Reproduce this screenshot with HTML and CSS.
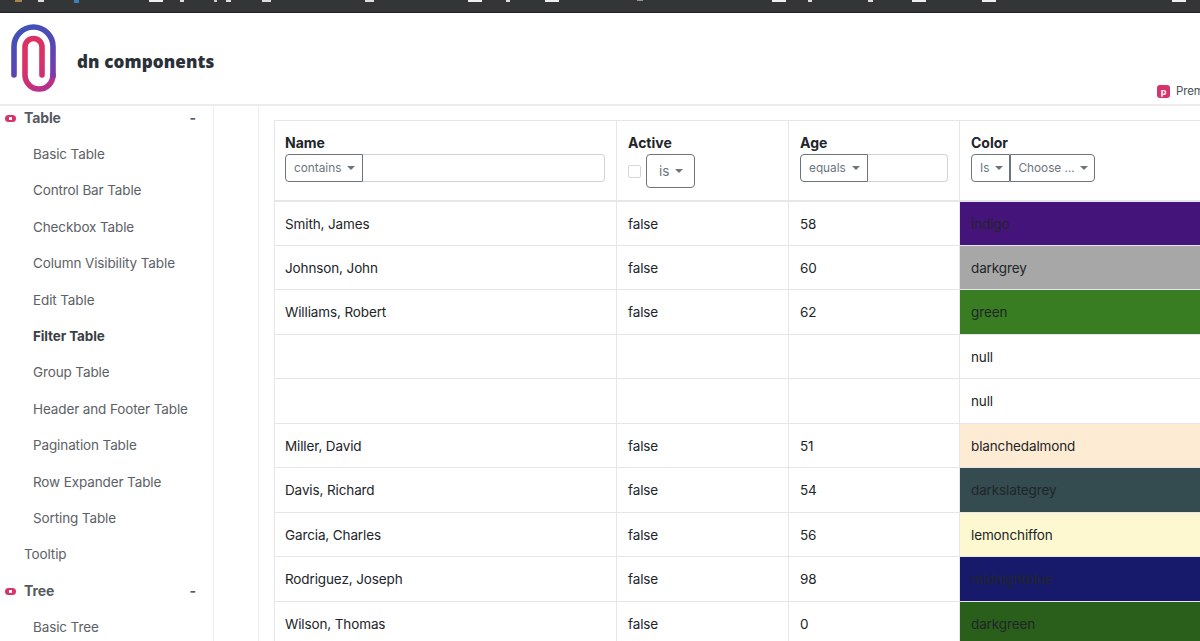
FILE: index.html
```html
<!DOCTYPE html>
<html lang="en">
<head>
<meta charset="utf-8">
<title>dn components</title>
<link rel="stylesheet" href="styles.css">
</head>
<body>
<div class="browserbar">
  <svg class="bar-icons" width="1200" height="3" viewBox="0 0 1200 3">
    <rect x="15" y="0" width="7" height="2" fill="#a8874d"/>
    <rect x="38" y="0" width="6" height="2" fill="#ddd"/>
    <rect x="74" y="0" width="5" height="3" fill="#3f7fb5"/>
    <rect x="149" y="0" width="14" height="2" fill="#eee"/>
    <rect x="180" y="0" width="4" height="2" fill="#ddd"/>
    <rect x="214" y="0" width="3" height="2" fill="#ccc"/>
    <rect x="226" y="0" width="5" height="2" fill="#ddd"/>
    <rect x="262" y="0" width="9" height="2" fill="#ddd"/>
    <rect x="365" y="0" width="9" height="2" fill="#ddd"/>
    <rect x="468" y="0" width="14" height="2" fill="#eee"/>
    <rect x="506" y="0" width="4" height="2" fill="#ddd"/>
    <rect x="545" y="0" width="14" height="2" fill="#eee"/>
    <rect x="637" y="0" width="6" height="1" fill="#999"/>
    <rect x="772" y="0" width="14" height="2" fill="#eee"/>
    <rect x="808" y="0" width="4" height="2" fill="#ddd"/>
    <rect x="868" y="0" width="5" height="2" fill="#ddd"/>
    <rect x="912" y="0" width="14" height="2" fill="#eee"/>
    <rect x="982" y="0" width="14" height="2" fill="#eee"/>
    <rect x="1172" y="0" width="14" height="2" fill="#eee"/>
  </svg>
</div>
<header class="site-header">
  <a class="brand" href="#">
    <svg class="logo" width="64" height="92" viewBox="0 0 64 92">
      <defs>
        <linearGradient id="outerGrad" gradientUnits="userSpaceOnUse" x1="14" y1="12" x2="53" y2="80">
          <stop offset="0" stop-color="#3b55b8"/>
          <stop offset="0.5" stop-color="#5a45b4"/>
          <stop offset="1" stop-color="#8f35a8"/>
        </linearGradient>
        <linearGradient id="innerGrad" gradientUnits="userSpaceOnUse" x1="53" y1="88" x2="30" y2="50">
          <stop offset="0" stop-color="#8f35a8"/>
          <stop offset="0.55" stop-color="#c9307a"/>
          <stop offset="1" stop-color="#dc3263"/>
        </linearGradient>
      </defs>
      <path class="clip" stroke="url(#innerGrad)" d="M53 62 A14 14 0 0 1 25 62 V34 A8.5 8.5 0 0 1 42 34 V62"/>
      <path class="clip" stroke="url(#outerGrad)" d="M14 62 V33.5 A19.5 19.5 0 0 1 53 33.5 V63"/>
    </svg>
    <span class="brand-name">dn components</span>
  </a>
  <div class="premium">
    <span class="premium-badge">p</span>
    <span class="premium-text">Premium</span>
  </div>
</header>
<div class="layout">
  <nav class="sidebar">
    <div class="nav-group"><span class="p-mark"></span><span>Table</span><span class="collapse">-</span></div>
    <a class="nav-sub" href="#">Basic Table</a>
    <a class="nav-sub" href="#">Control Bar Table</a>
    <a class="nav-sub" href="#">Checkbox Table</a>
    <a class="nav-sub" href="#">Column Visibility Table</a>
    <a class="nav-sub" href="#">Edit Table</a>
    <a class="nav-sub current" href="#">Filter Table</a>
    <a class="nav-sub" href="#">Group Table</a>
    <a class="nav-sub" href="#">Header and Footer Table</a>
    <a class="nav-sub" href="#">Pagination Table</a>
    <a class="nav-sub" href="#">Row Expander Table</a>
    <a class="nav-sub" href="#">Sorting Table</a>
    <a class="nav-top" href="#">Tooltip</a>
    <div class="nav-group"><span class="p-mark"></span><span>Tree</span><span class="collapse">-</span></div>
    <a class="nav-sub" href="#">Basic Tree</a>
  </nav>
  <div class="gutter"></div>
  <main class="content">
    <table class="data-table">
      <colgroup>
        <col class="col-name"><col class="col-active"><col class="col-age"><col class="col-color">
      </colgroup>
      <thead>
        <tr>
          <th>
            <div class="th-title">Name</div>
            <div class="filter"><button class="drop joined">contains</button><input class="text-input" type="text"></div>
          </th>
          <th>
            <div class="th-title">Active</div>
            <div class="filter"><input class="check" type="checkbox"><button class="drop tall">is</button></div>
          </th>
          <th>
            <div class="th-title">Age</div>
            <div class="filter"><button class="drop joined">equals</button><input class="text-input" type="text"></div>
          </th>
          <th>
            <div class="th-title">Color</div>
            <div class="filter"><button class="drop joined drop-is">Is</button><button class="drop joined-right">Choose ...</button></div>
          </th>
        </tr>
      </thead>
      <tbody>
        <tr><td>Smith, James</td><td>false</td><td>58</td><td class="c-indigo">indigo</td></tr>
        <tr><td>Johnson, John</td><td>false</td><td>60</td><td class="c-darkgrey">darkgrey</td></tr>
        <tr><td>Williams, Robert</td><td>false</td><td>62</td><td class="c-green">green</td></tr>
        <tr><td></td><td></td><td></td><td>null</td></tr>
        <tr><td></td><td></td><td></td><td>null</td></tr>
        <tr><td>Miller, David</td><td>false</td><td>51</td><td class="c-almond">blanchedalmond</td></tr>
        <tr><td>Davis, Richard</td><td>false</td><td>54</td><td class="c-slate">darkslategrey</td></tr>
        <tr><td>Garcia, Charles</td><td>false</td><td>56</td><td class="c-lemon">lemonchiffon</td></tr>
        <tr><td>Rodriguez, Joseph</td><td>false</td><td>98</td><td class="c-midnight">midnightblue</td></tr>
        <tr><td>Wilson, Thomas</td><td>false</td><td>0</td><td class="c-darkgreen">darkgreen</td></tr>
      </tbody>
    </table>
  </main>
</div>
</body>
</html>
```
FILE: styles.css
```css
* { box-sizing: border-box; }
html, body { margin: 0; height: 641px; overflow: hidden; background: #fff; }
body { font-family: Inter, "Liberation Sans", sans-serif; font-size: 13.5px; letter-spacing: -0.12px; color: #212529; display: flex; flex-direction: column; }
a { text-decoration: none; color: inherit; }

.browserbar { flex: none; height: 13px; background: #343537; border-bottom: 1px solid #232325; }
.bar-icons { display: block; }

.site-header { flex: none; height: 93px; display: grid; grid-template-columns: 1157px 1fr; border-bottom: 2px solid #ececec; overflow: hidden; }
.brand { display: flex; align-items: flex-start; }
.logo { flex: none; }
.clip { fill: none; stroke-width: 5.6; stroke-linecap: round; }
.brand-name { margin: 39px 0 0 13px; font-family: "Open Sans", sans-serif; font-weight: 800; font-size: 17.1px; line-height: 20px; color: #2a3138; letter-spacing: .1px; white-space: nowrap; }
.premium { display: flex; align-items: center; gap: 6px; margin-top: 70px; height: 16px; white-space: nowrap; }
.premium-badge { width: 13px; height: 13px; flex: none; border-radius: 3px; background: #d8336a; color: #fff; font-size: 9px; font-weight: 700; line-height: 14px; text-align: center; }
.premium-text { font-size: 11.5px; color: #495057; }

.layout { flex: 1; min-height: 0; display: grid; grid-template-columns: 214px 45px 1fr; overflow: hidden; }
.sidebar { border-right: 1px solid #ececec; display: flex; flex-direction: column; overflow: hidden; color: #5c6166; }
.nav-group, .nav-top, .nav-sub { flex: none; height: 36.4px; line-height: 36.4px; white-space: nowrap; }
.nav-group { position: relative; display: flex; padding-left: 24px; padding-right: 17px; font-weight: 700; font-size: 14px; color: #555a5f; }
.nav-group:first-child { height: 30px; line-height: 24px; }
.nav-group:first-child .p-mark { top: 12px; }
.p-mark { position: absolute; left: 5px; top: 50%; width: 11px; height: 7px; margin-top: -3px; border-radius: 4px; background: #d8336a; }
.p-mark::after { content: ""; position: absolute; left: 4px; top: 2px; width: 3px; height: 3px; background: #fff; }
.collapse { margin-left: auto; font-weight: 700; }
.nav-top { padding-left: 24px; }
.nav-sub { padding-left: 33px; }
.nav-sub.current { font-weight: 700; color: #3a3f44; }

.gutter { border-right: 1px solid #ececec; }

.content { padding: 14px 0 0 15px; overflow: hidden; min-width: 0; }
.data-table { width: 1100px; table-layout: fixed; border-collapse: collapse; }
.col-name { width: 342px; }
.col-active { width: 172px; }
.col-age { width: 171px; }
.data-table th, .data-table td { border: 1px solid #e4e6e8; padding: 0 11px; text-align: left; vertical-align: middle; }
.data-table th:first-child, .data-table td:first-child { padding-left: 10px; }
.data-table thead th { height: 80px; border-bottom-width: 2px; vertical-align: top; padding-top: 13px; font-weight: 400; }
.data-table tbody td { height: 44.5px; padding-top: 1px; color: #212529; }

.th-title { font-weight: 700; font-size: 14px; line-height: 17px; letter-spacing: 0; color: #212529; }
.filter { display: flex; align-items: center; margin-top: 3px; }
.drop { display: inline-flex; align-items: center; height: 28px; padding: 0 7px 0 8px; background: #fff; border: 1px solid #6c757d; border-radius: 4px; font: inherit; font-size: 11.8px; letter-spacing: 0; color: #6c757d; white-space: nowrap; }
.drop::after { content: ""; margin-left: 6px; border-top: 4px solid #6c757d; border-left: 4px solid transparent; border-right: 4px solid transparent; }
.drop.joined { border-radius: 4px 0 0 4px; }
.drop.drop-is { padding-right: 6px; }
.drop.joined-right { border-radius: 0 4px 4px 0; border-left: 0.5px solid #6c757d; padding: 0 6px 0 7px; }
.drop.joined-right::after { margin-left: 5px; }
.drop.tall { height: 34px; padding: 0 11px 0 12px; font-size: 13.5px; }
.text-input { flex: 1; min-width: 0; height: 28px; border: 1px solid #ced4da; border-left: 0; border-radius: 0 4px 4px 0; background: #fff; }
.check { appearance: none; width: 13px; height: 13px; margin: 0 5px 0 0; flex: none; border: 1px solid #d5d8db; border-radius: 2px; background: #fff; }

.c-indigo { background: #45147a; }
.c-darkgrey { background: #a7a7a7; }
.c-green { background: #387d21; }
.c-almond { background: #fdebd3; }
.c-slate { background: #344b4f; }
.c-lemon { background: #fef8d0; }
.c-midnight { background: #171a6b; }
.c-darkgreen { background: #2a5e1b; }
```
